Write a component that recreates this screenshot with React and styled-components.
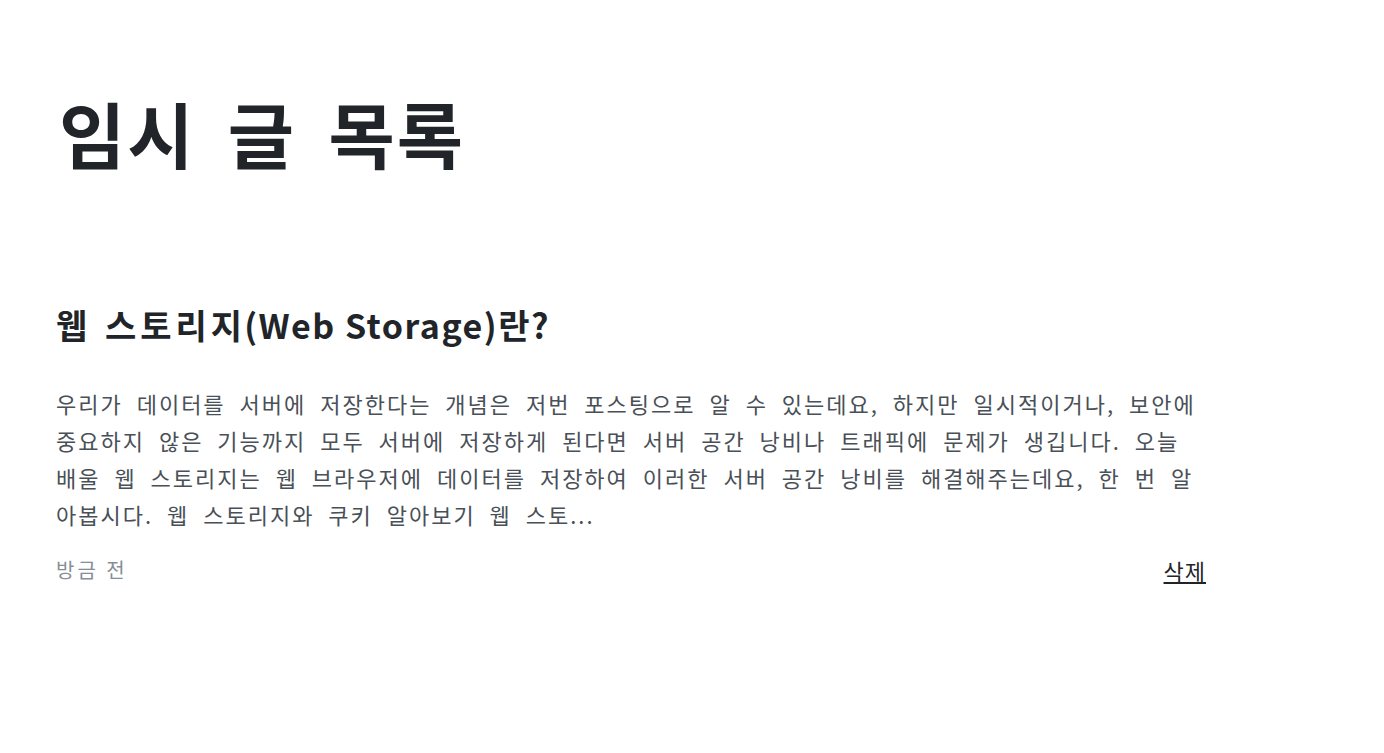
import React from 'react';
import styled, { createGlobalStyle } from 'styled-components';

const GlobalStyle = createGlobalStyle`
  body {
    margin: 0;
    background: #fff;
    font-family: "Noto Sans CJK KR", "Noto Sans", sans-serif;
  }
`;

const Page = styled.main`
  padding: 92px 56px 0;
  max-width: 1150px;
`;

const Heading = styled.h1`
  margin: 0 0 133px 3px;
  font-size: 72px;
  line-height: 80px;
  font-weight: 700;
  letter-spacing: 2px;
  word-spacing: 14px;
  color: #212529;
`;

const PostItem = styled.article`
  display: flex;
  flex-direction: column;
`;

const PostTitle = styled.h2`
  margin: 0 0 40px;
  font-size: 34px;
  line-height: 40px;
  font-weight: 700;
  letter-spacing: 1.5px;
  color: #212529;
`;

const Hangul = styled.span`
  letter-spacing: 4px;
  word-spacing: 2px;
  margin-right: -2px;
`;

const Summary = styled.p`
  margin: 0 0 22px;
  font-size: 22px;
  line-height: 37px;
  letter-spacing: 2px;
  word-spacing: 7px;
  color: #495057;
`;

const Footer = styled.div`
  display: flex;
  justify-content: space-between;
  align-items: center;
  line-height: 30px;
`;

const DateText = styled.span`
  font-size: 20px;
  color: #868e96;
  letter-spacing: 3px;
`;

const DeleteLink = styled.a`
  font-size: 22px;
  letter-spacing: 1px;
  color: #212529;
  text-decoration: underline;
  cursor: pointer;
`;

const post = {
  summary:
    '우리가 데이터를 서버에 저장한다는 개념은 저번 포스팅으로 알 수 있는데요, 하지만 일시적이거나, 보안에 중요하지 않은 기능까지 모두 서버에 저장하게 된다면 서버 공간 낭비나 트래픽에 문제가 생깁니다. 오늘 배울 웹 스토리지는 웹 브라우저에 데이터를 저장하여 이러한 서버 공간 낭비를 해결해주는데요, 한 번 알아봅시다. 웹 스토리지와 쿠키 알아보기 웹 스토...',
  date: '방금 전',
};

export default function App() {
  return (
    <>
      <GlobalStyle />
      <Page>
        <Heading>임시 글 목록</Heading>
        <PostItem>
          <PostTitle>
            <Hangul>웹 스토리지</Hangul>(Web Storage)란?
          </PostTitle>
          <Summary>{post.summary}</Summary>
          <Footer>
            <DateText>{post.date}</DateText>
            <DeleteLink>삭제</DeleteLink>
          </Footer>
        </PostItem>
      </Page>
    </>
  );
}
